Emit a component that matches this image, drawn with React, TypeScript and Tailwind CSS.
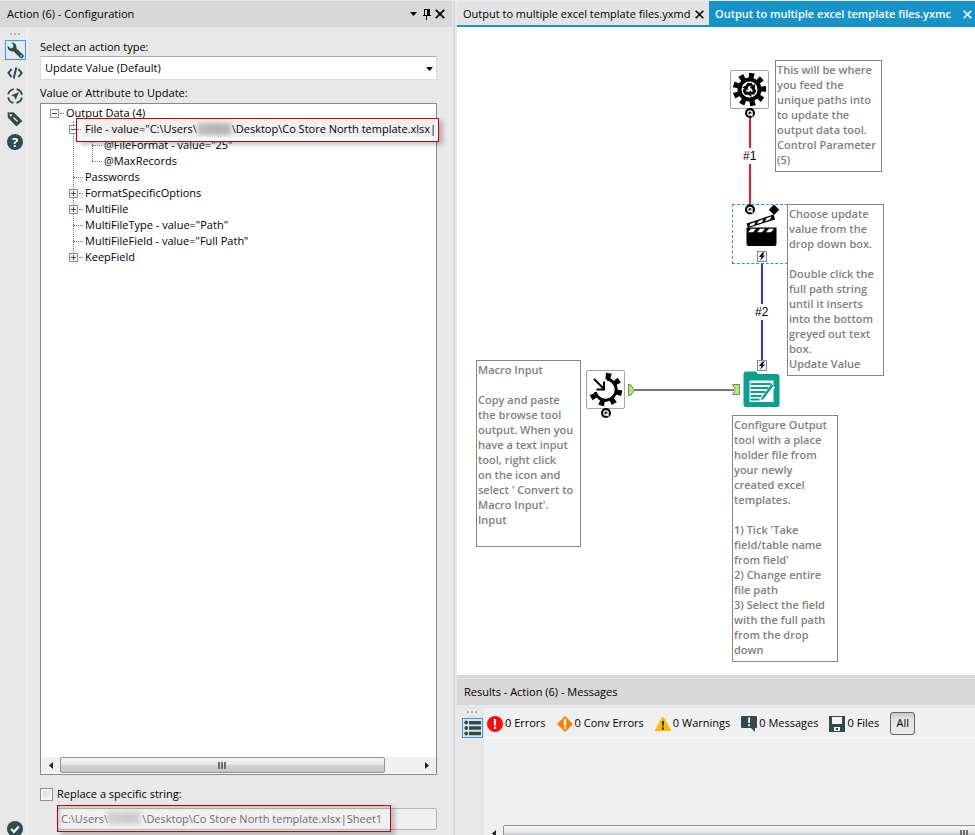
import type { ReactNode } from "react";

const NOTE = "absolute border border-[#858585] bg-white pl-px pt-px font-semibold leading-[15px] text-[#808080] whitespace-pre-line";

function Expander({ open }: { open: boolean }) {
  return (
    <button
      aria-label={open ? "Collapse" : "Expand"}
      className="relative z-10 flex h-[9px] w-[9px] shrink-0 items-center justify-center border border-[#919191] bg-[#f4f4f4]"
    >
      <svg width="5" height="5" viewBox="0 0 5 5" shapeRendering="crispEdges">
        <path d={open ? "M0 2h5v1H0z" : "M0 2h5v1H0zM2 0h1v5H2z"} fill="#33508c" />
      </svg>
    </button>
  );
}

function Leaf({ children, open }: { children: ReactNode; open?: boolean }) {
  return (
    <div className="flex h-4 items-center">
      {open === undefined ? (
        <span className="ml-1 w-[10px] border-t border-dotted border-[#808080]" />
      ) : (
        <>
          <Expander open={open} />
          <span className="ml-px w-1 border-t border-dotted border-[#808080]" />
        </>
      )}
      <span className="ml-[2px] whitespace-nowrap">{children}</span>
    </div>
  );
}

const BRANCH =
  "relative before:absolute before:left-1 before:top-0 before:bottom-2 before:border-l before:border-dotted before:border-[#808080]";

function Smudge({ className }: { className: string }) {
  return (
    <span
      aria-hidden="true"
      className={
        "bg-[linear-gradient(90deg,#d2d2d2,#b0b0b0_12%,#c4c4c4_22%,#b0b0b0_34%,#bcbcbc_46%,#acacac_60%,#bbb_72%,#b0b0b0_84%,#d0d0d0)] blur-[2px] " +
        className
      }
    />
  );
}

function Scrollbar({ thumb }: { thumb: string }) {
  return (
    <div className="flex h-4 items-center bg-[#f0f0f0]">
      <button aria-label="Scroll left" className="flex w-[19px] shrink-0 justify-center">
        <svg width="4" height="7" viewBox="0 0 4 7"><path d="M4 0v7L0 3.5z" fill="#222" /></svg>
      </button>
      <div className="h-full flex-1">
        <div
          className={
            "flex h-full items-center justify-center gap-px rounded-xs border border-[#8f9294] bg-[linear-gradient(#f6f6f6,#e6e6e7_48%,#d2d3d5_52%,#c4c6c8)] " +
            thumb
          }
        >
          <i className="h-[7px] w-[2px] bg-[#6b6b6b]" />
          <i className="h-[7px] w-[2px] bg-[#6b6b6b]" />
          <i className="h-[7px] w-[2px] bg-[#6b6b6b]" />
        </div>
      </div>
      <button aria-label="Scroll right" className="flex w-[19px] shrink-0 justify-center">
        <svg width="4" height="7" viewBox="0 0 4 7"><path d="M0 0v7l4-3.5z" fill="#222" /></svg>
      </button>
    </div>
  );
}

function CloseX({ size = 9 }: { size?: number }) {
  return (
    <svg width={size} height={size} viewBox="0 0 9 9">
      <path d="M.7.7l7.6 7.6M8.3.7L.7 8.3" stroke="currentColor" strokeWidth="1.6" />
    </svg>
  );
}

function Grip() {
  return (
    <div className="flex h-[2px] justify-center gap-[2px]">
      <i className="w-[2px] bg-[#b4b4b4]" />
      <i className="w-[2px] bg-[#b4b4b4]" />
      <i className="w-[2px] bg-[#b4b4b4]" />
    </div>
  );
}

const INK = "#2f4b4b";

function SideBar() {
  return (
    <nav className="flex w-7 shrink-0 flex-col items-center border-r border-[#f2f2f2] pl-[3px] pt-[6px]">
      <Grip />
      <button aria-label="Configuration" className="mt-[5px] flex h-5 w-[21px] items-center justify-center border border-[#3399ff] bg-[#e4eaf0]">
        <svg width="17" height="17" viewBox="0 0 17 17" fill={INK}>
          <path d="M4.200.6Q7 .2 8.600 2.200 9.800 4 9.200 6.200L16 12.400a2.200 2.200 0 0 1-3.200 3.200L6.500 9.300Q3.500 9.900 1.800 8 .2 6.300.8 3.800L3.400 6.400 5.800 5.800 6.500 3.200z" />
          <circle cx="14.200" cy="13.900" r=".8" fill="#e4eaf0" />
        </svg>
      </button>
      <button aria-label="XML view" className="mt-[5px] h-4">
        <svg width="16" height="16" viewBox="0 0 16 16" fill="none" stroke={INK} strokeWidth="2">
          <path d="M4.600 4L1.400 8l3.200 4M11.400 4l3.200 4-3.200 4M9.300 2.600L6.700 13.400" />
        </svg>
      </button>
      <button aria-label="Navigation" className="mt-[7px] h-4">
        <svg width="16" height="16" viewBox="0 0 16 16">
          <circle cx="8" cy="8" r="7" fill="none" stroke={INK} strokeWidth="1.800" strokeDasharray="8 3" strokeDashoffset="-1.500" />
          <path d="M12 4L8.600 12 7.400 8.700 4 7.600z" fill={INK} />
        </svg>
      </button>
      <button aria-label="Annotation" className="mt-[7px] h-4">
        <svg width="16" height="16" viewBox="0 0 16 16">
          <path fillRule="evenodd" d="M.5 1.500l.4 5.200 8.500 8.700 6-5.400L6.600 1.200zM3.800 3a1.300 1.300 0 1 1 0 2.600 1.300 1.300 0 0 1 0-2.600zM6 7l4 4 1-1-4-4z" fill={INK} />
        </svg>
      </button>
      <button aria-label="Help" className="mt-[7px] flex h-4 w-4 items-center justify-center rounded-full bg-[#2f4b4b] text-[13px] font-bold leading-4 text-white">
        ?
      </button>
      <button aria-label="Status" className="mt-auto h-[14px]">
        <svg width="16" height="16" viewBox="0 0 16 16">
          <circle cx="8" cy="8" r="8" fill={INK} />
          <path d="M4.200 8l2.800 2.800 4.800-5.200" fill="none" stroke="#fff" strokeWidth="2.200" />
        </svg>
      </button>
    </nav>
  );
}

function ConfigPanel() {
  return (
    <section className="flex w-[452px] shrink-0 flex-col">
      <header className="flex h-[26px] shrink-0 items-center bg-[#d8d8d8] px-[7px]">
        <h1 className="flex-1">Action (6) - Configuration</h1>
        <button aria-label="Window options" className="mr-[6px]">
          <svg width="7" height="4" viewBox="0 0 7 4"><path d="M0 0h7L3.500 4z" /></svg>
        </button>
        <button aria-label="Pin" className="mr-1">
          <svg width="8" height="11" viewBox="0 0 8 11" shapeRendering="crispEdges">
            <path d="M1 0h6v6h1v1H0V6h1zM3 7h1v4H3z" />
            <path d="M2 1h2v5H2z" fill="#d8d8d8" />
          </svg>
        </button>
        <button aria-label="Close panel"><CloseX size={10} /></button>
      </header>
      <div className="flex min-h-0 flex-1">
        <SideBar />
        <div className="flex min-w-0 flex-1 flex-col pl-3 pr-[15px]">
          <label htmlFor="action-type" className="mt-3 leading-4">Select an action type:</label>
          <div className="relative mt-px shrink-0">
            <select
              id="action-type"
              className="h-6 w-full appearance-none border border-[#d5dce6] border-t-[#ababb3] bg-white pl-1 leading-4"
            >
              <option>Update Value (Default)</option>
            </select>
            <svg className="pointer-events-none absolute right-1 top-[11px]" width="7" height="4" viewBox="0 0 7 4">
              <path d="M0 0h7L3.500 4z" />
            </svg>
          </div>
          <p className="mt-[5px] leading-4">Value or Attribute to Update:</p>
          <div className="mt-[2px] flex min-h-0 flex-1 flex-col border border-[#828790] bg-white">
            <ul className="flex-1 pl-[9px] pt-px">
              <li>
                <div className="flex h-4 items-center">
                  <Expander open />
                  <span className="ml-px w-1 border-t border-dotted border-[#808080]" />
                  <span className="ml-[2px]">Output Data (4)</span>
                </div>
                <ul className={"ml-[19px] " + BRANCH}>
                  <li>
                    <div className="relative flex h-4 items-center">
                      <Expander open />
                      <div className="absolute -top-[3px] -right-[3px] left-[7px] z-20 flex h-6 items-center border border-[#c00000] bg-[linear-gradient(#e8e8e8,#f6f6f6_4px,#fff)] pb-[2px] shadow-[4px_3px_4px_rgba(0,0,0,0.22)]">
                        <span className="mr-[2px] w-1 border-t border-dotted border-[#808080]" />
                        <span className="flex h-4 min-w-0 items-center whitespace-nowrap bg-[#f0f0f0] pl-[2px]">
                          File - value="C:\Users\
                          <Smudge className="h-3 w-[35px] shrink-0" />
                          \Desktop\Co Store North template.xlsx|
                        </span>
                      </div>
                    </div>
                    <ul className={"ml-[19px] " + BRANCH}>
                      <li><Leaf>@FileFormat - value="25"</Leaf></li>
                      <li><Leaf>@MaxRecords</Leaf></li>
                    </ul>
                  </li>
                  <li><Leaf>Passwords</Leaf></li>
                  <li><Leaf open={false}>FormatSpecificOptions</Leaf></li>
                  <li><Leaf open={false}>MultiFile</Leaf></li>
                  <li><Leaf>MultiFileType - value="Path"</Leaf></li>
                  <li><Leaf>MultiFileField - value="Full Path"</Leaf></li>
                  <li><Leaf open={false}>KeepField</Leaf></li>
                </ul>
              </li>
            </ul>
            <div className="mb-px"><Scrollbar thumb="w-[91%]" /></div>
          </div>
          <label className="mt-[11px] flex h-4 items-center gap-1">
            <input
              type="checkbox"
              className="h-[13px] w-[13px] appearance-none border border-[#8e8f8f] bg-[linear-gradient(135deg,#cfd3d8,#fbfbfb)] shadow-[inset_0_0_0_2px_#f4f4f4]"
            />
            Replace a specific string:
          </label>
          <div className="relative mt-[6px] mb-[5px] ml-[17px]">
            <input
              aria-label="String to replace"
              disabled
              value={"C:\\Users\\" + "\u00a0".repeat(12) + "\\Desktop\\Co Store North template.xlsx|Sheet1"}
              className="block h-[22px] w-full rounded-xs border border-[#b0b3b8] bg-[#f0f0f0] pb-[2px] pl-[3px] text-[#6d6d6d]"
            />
            <Smudge className="absolute left-[50px] top-[4px] h-3 w-[34px] opacity-60" />
            <div className="pointer-events-none absolute -top-[3px] right-[46px] -bottom-[2px] left-0 border border-[#c00000] shadow-[4px_3px_4px_rgba(0,0,0,0.22),inset_2px_2px_3px_rgba(0,0,0,0.15)]" />
          </div>
        </div>
      </div>
    </section>
  );
}

function Teeth({ angles, cx, cy }: { angles: number[]; cx: number; cy: number }) {
  return (
    <>
      {angles.map((a) => (
        <path
          key={a}
          d={`M${cx - 2.2} ${cy - 10}L${cx - 2.9} ${cy - 16.6}h5.8L${cx + 2.2} ${cy - 10}z`}
          transform={`rotate(${a} ${cx} ${cy})`}
        />
      ))}
    </>
  );
}

const TOOL = "absolute h-[39px] w-[39px] rounded-xs border border-[#a5a5a5] bg-white";

function ControlParameterTool() {
  return (
    <div className={TOOL + " left-[273px] top-[43px]"}>
      <svg width="37" height="37" viewBox="0 0 37 37">
        <Teeth angles={[8, 48, 88, 128, 168, 208, 248, 288, 328]} cx={18.5} cy={18.5} />
        <circle cx="18.500" cy="18.500" r="10" fill="#fff" stroke="#000" strokeWidth="4" />
        {[0, 120, 240].map((a) => (
          <g key={a} transform={`rotate(${a} 18.500 18.500)`}>
            <path d="M15 17L17.200 13.400h2.600l1.200 1.800" fill="none" stroke="#000" strokeWidth="3" />
            <path d="M18.600 17l5.200 1 .2-5z" />
          </g>
        ))}
      </svg>
    </div>
  );
}

function MacroInputTool() {
  return (
    <div className={TOOL + " left-[129px] top-[343px]"}>
      <svg width="37" height="37" viewBox="0 0 37 37">
        <Teeth angles={[12, 56, 103, 148, 195, 240]} cx={18.5} cy={18.5} />
        <path d="M20 8.100A10.600 10.600 0 1 1 8.200 21" fill="none" stroke="#000" strokeWidth="3" />
        <path d="M7 8l9.800 9.800M17 10.500v8H9.500" fill="none" stroke="#000" strokeWidth="2" />
      </svg>
    </div>
  );
}

function ActionTool() {
  return (
    <div className="absolute left-[275px] top-[177px] h-[60px] w-14 border border-dashed border-[#2f8fe6]">
      <svg width="54" height="58" viewBox="0 0 54 58">
        <path d="M41 -.5l5.200 5.200-5.200 5.200-5.200-5.200z" />
        <path d="M13.500 22.500h30V39a2 2 0 0 1-2 2h-26a2 2 0 0 1-2-2z" />
        <path d="M13.500 18.500L40.500 9.500l1.600 5L15 23z" />
        <path d="M16 21.500l1.500-2.800 5-1.700-1.500 2.900zM24 18.800l1.500-2.800 5-1.700-1.500 2.900zM32 16.200l1.500-2.900 5-1.700-1.500 2.900z" fill="#fff" />
        <path d="M15 27.200l3-3.500h5l-3 3.500zM24 27.200l3-3.500h5l-3 3.500zM33 27.200l3-3.500h5l-3 3.500z" fill="#fff" />
      </svg>
    </div>
  );
}

function OutputTool() {
  return (
    <svg className="absolute left-[286px] top-[344px]" width="38" height="37" viewBox="0 0 38 37">
      <path d="M3 .5h10l2 2.500h19a2.500 2.500 0 0 1 2.500 2.500v28a2.500 2.500 0 0 1-2.500 2.500H3A2.500 2.500 0 0 1 .5 33.500V3A2.500 2.500 0 0 1 3 .5z" fill="#0aa08c" />
      <path d="M6.500 9.500h24V31h-24z" fill="#fff" />
      <path d="M7.500 13h21M7.500 17h18M7.500 21h15M7.500 25h11M7.500 28.500h9" stroke="#0aa08c" strokeWidth="2.200" />
      <path d="M30 15l-9 12.500" stroke="#fff" strokeWidth="5" />
      <path d="M30.500 14.500L20.500 28 18 29.500l.7-3L28.500 13z" fill="#0aa08c" />
    </svg>
  );
}

function Anchor({ x, y }: { x: number; y: number }) {
  return (
    <g fill="none">
      <circle cx={x} cy={y} r="5" fill="#000" />
      <circle cx={x} cy={y} r="2.200" stroke="#fff" strokeWidth="1.300" />
      <path d={`M${x} ${y + 0.5}l2.600 2.800`} stroke="#fff" strokeWidth="1.300" />
    </g>
  );
}

function Bolt({ x, y }: { x: number; y: number }) {
  return (
    <g>
      <rect x={x + 0.5} y={y + 0.5} width="9" height="10" fill="#f2f2f2" stroke="#8a8a8a" />
      <path d={`M${x + 5.5} ${y + 1.5}l-3.500 4.500h2.500l-1.500 3.800 5-5.300h-2.500l2-3z`} />
    </g>
  );
}

function Canvas() {
  return (
    <main className="relative min-h-0 flex-1 overflow-hidden bg-white">
      <ControlParameterTool />
      <MacroInputTool />
      <ActionTool />
      <OutputTool />
      <svg className="absolute left-0 top-0" width="518" height="648" viewBox="0 0 518 648">
        <path d="M293 91v87" stroke="#ed1c24" strokeWidth="2" />
        <path d="M305 237v97" stroke="#3232e0" strokeWidth="2" />
        <path d="M177 363h100" stroke="#777" strokeWidth="2" />
        <path d="M171.500 357.500h2l4 5.500-4 5.500h-2z" fill="#b6e07a" stroke="#5f9a50" />
        <path d="M275.500 357.500h7v10h-7l3-5z" fill="#c3e67f" stroke="#5f9a50" />
        <Anchor x={293} y={86} />
        <Anchor x={293} y={182.5} />
        <Anchor x={149} y={386} />
        <Bolt x={300} y={224} />
        <Bolt x={300} y={333} />
      </svg>
      <span className="absolute left-[286px] top-[121px] bg-white font-['Liberation_Sans'] text-xs leading-4">#1</span>
      <span className="absolute left-[298px] top-[277px] bg-white font-['Liberation_Sans'] text-xs leading-4">#2</span>
      <p className={NOTE + " left-[318px] top-[33px] h-28 w-[107px]"}>
        {"This will be where\nyou feed the\nunique paths into\nto update the\noutput data tool.\nControl Parameter\n(5)"}
      </p>
      <p className={NOTE + " left-[330px] top-[177px] h-[172px] w-[97px]"}>
        {"Choose update\nvalue from the\ndrop down box.\n\nDouble click the\nfull path string\nuntil it inserts\ninto the bottom\ngreyed out text\nbox.\nUpdate Value"}
      </p>
      <p className={NOTE + " left-[19px] top-[333px] h-[187px] w-[105px]"}>
        {"Macro Input\n\nCopy and paste\nthe browse tool\noutput. When you\nhave a text input\ntool, right click\non the icon and\nselect ' Convert to\nMacro Input'.\nInput"}
      </p>
      <p className={NOTE + " left-[275px] top-[388px] h-[247px] w-[106px]"}>
        {"Configure Output\ntool with a place\nholder file from\nyour newly\ncreated excel\ntemplates.\n\n1) Tick 'Take\nfield/table name\nfrom field'\n2) Change entire\nfile path\n3) Select the field\nwith the full path\nfrom the drop\ndown"}
      </p>
    </main>
  );
}

function Filter({ icon, children }: { icon: ReactNode; children: ReactNode }) {
  return (
    <button className="flex items-center gap-[2px] whitespace-nowrap">
      <svg width="16" height="16" viewBox="0 0 16 16">{icon}</svg>
      {children}
    </button>
  );
}

function ResultsPanel() {
  return (
    <section className="flex h-40 shrink-0 flex-col bg-[#e8e8e8]">
      <header className="flex h-[30px] shrink-0 items-center border-t-[3px] border-[#d8d8d8] bg-[#d8d8d8] pl-[7px] pt-px shadow-[inset_0_1px_0_#e8e8e8]">
        <h2>Results - Action (6) - Messages</h2>
      </header>
      <div className="flex min-h-0 flex-1">
        <div className="flex w-[27px] shrink-0 flex-col items-center pl-[3px] pt-[6px]">
          <Grip />
          <button aria-label="Messages list" className="mt-[5px] flex h-5 w-[21px] items-center justify-center border border-[#3399ff]">
            <svg width="17" height="16" viewBox="0 0 17 16" fill={INK}>
              <circle cx="2.200" cy="2.500" r="1.900" /><circle cx="2.200" cy="8" r="1.900" /><circle cx="2.200" cy="13.500" r="1.900" />
              <path d="M5 1h12v3.500H5zM5 6.300h12v3.500H5zM5 11.700h12v3.500H5z" />
            </svg>
          </button>
        </div>
        <div className="mt-[3px] flex min-w-0 flex-1 flex-col bg-[#f0f0f0]">
          <div className="flex h-[30px] shrink-0 items-center gap-[11px] border-b border-white pl-[3px] pt-[2px]">
            <Filter icon={<><circle cx="8" cy="8" r="8" fill="#f70d0d" /><path d="M6.900 3h2.200v6.500H6.900zM6.900 10.800h2.200V13H6.900z" fill="#fff" /></>}>
              0 Errors
            </Filter>
            <Filter icon={<><path d="M8 0l8 8-8 8-8-8z" fill="#ff7f00" /><path d="M6.900 3h2.200v6.500H6.900zM6.900 10.800h2.200V13H6.900z" fill="#fff" /></>}>
              0 Conv Errors
            </Filter>
            <Filter icon={<><path d="M7 1.600q1-1 2 0l7 12.400q0 1-1 1H1q-1 0-1-1z" fill="#ffbb00" /><path d="M7 5h2l-.4 5.500H7.400zM7 11.500h2v2H7z" fill="#222" /></>}>
              0 Warnings
            </Filter>
            <Filter icon={<><path d="M1 0h14q1 0 1 1v10q0 1-1 1h-1v4l-4-4H1q-1 0-1-1V1q0-1 1-1z" fill={INK} /><path d="M7.200 1.500h1.800v5.500H7.200zM7.200 8.300h1.800v1.900H7.200z" fill="#fff" /></>}>
              0 Messages
            </Filter>
            <Filter icon={<><path d="M0 0h16v16H0z" fill={INK} /><path d="M3 1h10v7H3zM5 11h6v4H5z" fill="#f4f4f4" /><path d="M7 12h2v2H7z" fill={INK} /></>}>
              0 Files
            </Filter>
            <button className="h-[23px] w-[25px] rounded-[3px] border border-[#666] bg-[linear-gradient(#c9c9c9,#e2e2e2_30%,#ececec)]">
              All
            </button>
          </div>
          <div className="flex-1" />
          <div className="h-[10px] overflow-hidden">
            <div className="w-[960px]"><Scrollbar thumb="w-full" /></div>
          </div>
        </div>
      </div>
    </section>
  );
}

export default function App() {
  return (
    <div className="flex h-screen overflow-hidden bg-[#e8e8e8] pt-px font-['Open_Sans','Noto_Sans',sans-serif] text-[11px] text-black">
      <ConfigPanel />
      <div className="w-[5px] shrink-0 border-r-2 border-l border-[#e8e8e8] bg-[#d8d8d8]" />
      <div className="flex min-w-0 flex-1 flex-col">
        <div className="flex h-[26px] shrink-0 items-stretch border-b-2 border-[#1893c9] bg-[#1893c9]" role="tablist">
          <div className="flex w-[252px] items-center justify-between bg-[#e3e3e3] pr-[5px] pl-[6px] pt-[2px]">
            <button role="tab" aria-selected="false">Output to multiple excel template files.yxmd</button>
            <button aria-label="Close yxmd"><CloseX /></button>
          </div>
          <div className="flex flex-1 items-center justify-between whitespace-nowrap pr-[3px] pl-[6px] pt-[2px] font-semibold text-white">
            <button role="tab" aria-selected="true">Output to multiple excel template files.yxmc</button>
            <button aria-label="Close yxmc"><CloseX /></button>
          </div>
        </div>
        <Canvas />
        <ResultsPanel />
      </div>
    </div>
  );
}
